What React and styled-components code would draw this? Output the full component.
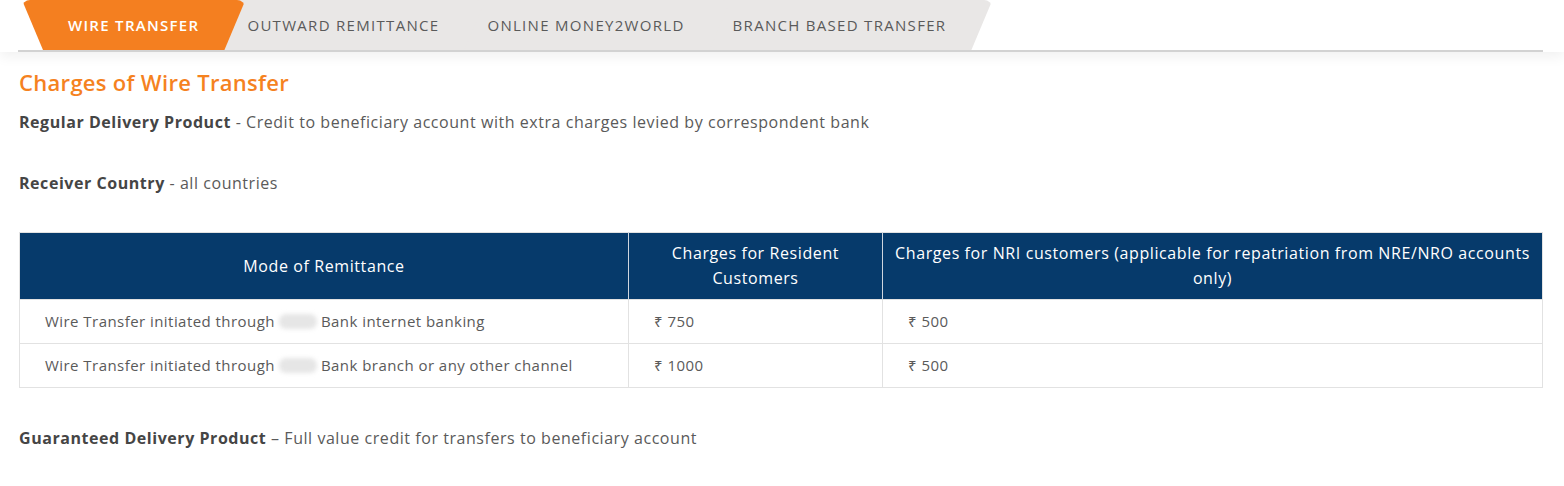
import React from "react";
import styled, { createGlobalStyle } from "styled-components";

const Global = createGlobalStyle`
  html, body { margin: 0; padding: 0; background: #fff; }
  body { font-family: "Open Sans", "Noto Sans", "DejaVu Sans", sans-serif; color: #555; }
  * { box-sizing: border-box; }
`;

const Header = styled.div`
  box-shadow: 0 5px 12px rgba(0, 0, 0, 0.06);
  background: #fff;
`;

const TabBar = styled.div`
  display: flex;
  height: 52px;
  margin: 0 21px 0 18px;
  padding-left: 4px;
  border-bottom: 2px solid #d2d2d2;
`;

const Tab = styled.div`
  position: relative;
  z-index: ${(p) => (p.$active ? 10 : 5 - p.$i)};
  height: 50px;
  margin-left: ${(p) => (p.$i === 0 ? "0" : "-44px")};
  padding: 0 46px;
  display: flex;
  align-items: center;
  font-size: 15px;
  letter-spacing: 1.3px;
  text-transform: uppercase;
  white-space: nowrap;
  font-weight: ${(p) => (p.$active ? 600 : 400)};
  color: ${(p) => (p.$active ? "#fff" : "#5a5a5a")};
  background: ${(p) => (p.$active ? "#f47f20" : "#e9e7e6")};
  clip-path: polygon(0 0, 100% 0, calc(100% - 21px) 100%, 21px 100%);
  border-radius: 8px 8px 0 0;
`;

const Content = styled.div`
  padding: 0 21px 0 19px;
`;

const Title = styled.h2`
  margin: 17px 0 15px;
  font-size: 22px;
  line-height: 26px;
  letter-spacing: 0.3px;
  font-weight: 600;
  color: #f5821f;
`;

const Para = styled.p`
  margin: 0 0 37px;
  font-size: 16px;
  line-height: 24px;
  letter-spacing: 0.55px;
  color: #5a5a5a;
`;

const Label = styled.strong`
  font-weight: 700;
  color: #454545;
`;

const Table = styled.table`
  width: 100%;
  border-collapse: collapse;
  table-layout: fixed;
  margin-bottom: 38px;
  border: 1px solid #e2e2e2;
`;

const Th = styled.th`
  background: #063a6b;
  color: #fff;
  font-weight: 400;
  font-size: 16px;
  line-height: 25px;
  letter-spacing: 0.6px;
  padding: 8px 10px;
  text-align: center;
  border-left: 1px solid #cfd6df;
  &:first-child { border-left: none; }
`;

const Td = styled.td`
  font-size: 15px;
  line-height: 23px;
  letter-spacing: 0.45px;
  color: #5a5a5a;
  padding: 10px 25px;
  border-top: 1px solid #e2e2e2;
  border-left: 1px solid #e2e2e2;
  &:first-child { border-left: none; }
`;

const Blur = styled.span`
  display: inline-block;
  width: 38px;
  height: 15px;
  margin: 0 4px 0 4px;
  vertical-align: -2px;
  border-radius: 7px;
  background: #e6e6e6;
  filter: blur(2px);
`;

const tabs = ["Wire Transfer", "Outward Remittance", "Online Money2World", "Branch Based Transfer"];

const rows = [
  ["Bank internet banking", "₹ 750", "₹ 500"],
  ["Bank branch or any other channel", "₹ 1000", "₹ 500"],
];

export default function App() {
  return (
    <>
      <Global />
      <Header>
        <TabBar>
          {tabs.map((t, i) => (
            <Tab key={t} $i={i} $active={i === 0}>
              {t}
            </Tab>
          ))}
        </TabBar>
      </Header>
      <Content>
        <Title>Charges of Wire Transfer</Title>
        <Para>
          <Label>Regular Delivery Product</Label> - Credit to beneficiary account with extra charges levied by correspondent bank
        </Para>
        <Para>
          <Label>Receiver Country</Label> - all countries
        </Para>
        <Table>
          <colgroup>
            <col style={{ width: "609px" }} />
            <col style={{ width: "254px" }} />
            <col />
          </colgroup>
          <thead>
            <tr>
              <Th>Mode of Remittance</Th>
              <Th>Charges for Resident Customers</Th>
              <Th>Charges for NRI customers (applicable for repatriation from NRE/NRO accounts only)</Th>
            </tr>
          </thead>
          <tbody>
            {rows.map((r) => (
              <tr key={r[0]}>
                <Td>
                  Wire Transfer initiated through<Blur />{r[0]}
                </Td>
                <Td>{r[1]}</Td>
                <Td>{r[2]}</Td>
              </tr>
            ))}
          </tbody>
        </Table>
        <Para>
          <Label>Guaranteed Delivery Product</Label> – Full value credit for transfers to beneficiary account
        </Para>
      </Content>
    </>
  );
}
